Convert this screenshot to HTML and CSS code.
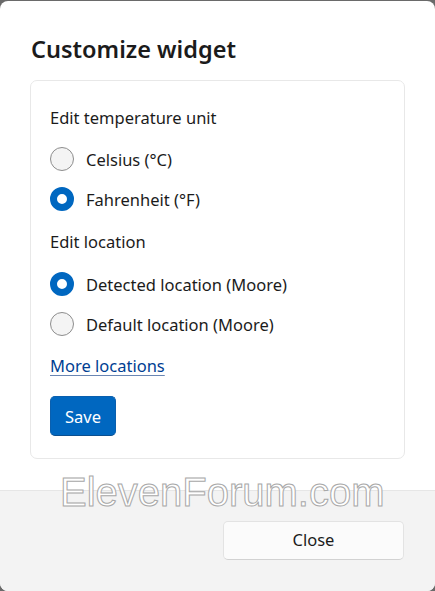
FILE: index.html
```html
<!DOCTYPE html>
<html lang="en">
<head>
<meta charset="utf-8">
<title>Customize widget</title>
<link rel="stylesheet" href="styles.css">
</head>
<body>
<div class="dialog">
  <div class="content">
    <h1 class="title">Customize widget</h1>
    <div class="card">
      <div class="label">Edit temperature unit</div>
      <div class="group">
        <div class="radio-row"><span class="radio"></span><span>Celsius (°C)</span></div>
        <div class="radio-row"><span class="radio checked"></span><span>Fahrenheit (°F)</span></div>
      </div>
      <div class="label label-gap">Edit location</div>
      <div class="group group-gap">
        <div class="radio-row"><span class="radio checked"></span><span>Detected location (Moore)</span></div>
        <div class="radio-row"><span class="radio"></span><span>Default location (Moore)</span></div>
      </div>
      <a class="link" href="#">More locations</a>
      <div class="actions"><button class="btn-primary">Save</button></div>
    </div>
  </div>
  <div class="footer">
    <button class="btn-secondary">Close</button>
  </div>
  <div class="watermark">ElevenForum.com</div>
</div>
</body>
</html>
```
FILE: styles.css
```css
html, body {
  margin: 0;
  padding: 0;
}
body {
  background: #6a6a6a;
  font-family: "Noto Sans", "Open Sans", sans-serif;
  color: #1b1b1b;
  width: 435px;
  height: 591px;
  overflow: hidden;
}
.dialog {
  position: relative;
  margin-top: 1px;
  height: 590px;
  background: #ffffff;
  border-radius: 8px;
  display: flex;
  flex-direction: column;
  overflow: hidden;
}
.content {
  flex: 1;
  padding: 0 30px 0 30px;
}
.title {
  margin: 32px 0 15px 1px;
  font-size: 23.5px;
  line-height: 32px;
  font-weight: 600;
  color: #1b1b1b;
}
.card {
  border: 1px solid #e8e8e8;
  border-radius: 7px;
  padding: 25px 20px 22px 19px;
  display: flex;
  flex-direction: column;
  align-items: flex-start;
}
.label {
  font-size: 16.5px;
  line-height: 24px;
  height: 24px;
}
.label-gap {
  margin-top: 11px;
}
.group {
  margin-top: 9px;
  display: flex;
  flex-direction: column;
}
.group-gap {
  margin-top: 10px;
}
.radio-row {
  height: 40px;
  display: flex;
  align-items: center;
  gap: 12px;
  font-size: 16.5px;
}
.radio {
  width: 24px;
  height: 24px;
  box-sizing: border-box;
  border-radius: 50%;
  border: 1px solid #8d8d8d;
  background: #f4f4f4;
}
.radio.checked {
  border: 7px solid #0067c0;
  background: #ffffff;
}
.link {
  margin-top: 10px;
  font-size: 16.5px;
  line-height: 24px;
  color: #003e92;
  text-decoration: underline;
  text-decoration-color: #6a86b3;
  text-underline-offset: 3px;
}
.actions {
  margin-top: 18px;
}
.btn-primary {
  width: 66px;
  height: 40px;
  border: 1px solid #0a5fae;
  border-bottom-color: #0b4f8f;
  border-radius: 5px;
  background: #0067c0;
  color: #ffffff;
  font-family: inherit;
  font-size: 16.5px;
  padding: 0;
}
.footer {
  height: 101px;
  border-top: 1px solid #e6e6e6;
  background: #f3f3f3;
  display: flex;
  justify-content: flex-end;
  align-items: flex-start;
  padding: 30px 31px 0 0;
  box-sizing: border-box;
}
.btn-secondary {
  width: 181px;
  height: 39px;
  border: 1px solid #e3e3e3;
  border-bottom-color: #d2d2d2;
  border-radius: 5px;
  background: #fbfbfb;
  color: #1b1b1b;
  font-family: inherit;
  font-size: 16.5px;
  padding: 0 0 2px 0;
}
.watermark {
  position: absolute;
  left: 60px;
  top: 471px;
  font-family: "Liberation Sans", Arial, sans-serif;
  font-size: 40px;
  line-height: 40px;
  color: #ffffff;
  -webkit-text-stroke: 1px #a8a8a8;
  pointer-events: none;
}
```
